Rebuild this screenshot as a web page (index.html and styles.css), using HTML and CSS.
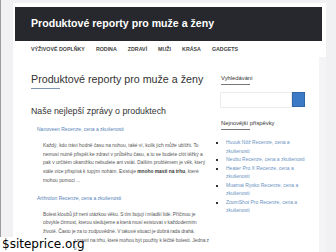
FILE: index.html
```html
<!DOCTYPE html>
<html>

<head>
    <meta charset="utf-8">
    <title>Produktové reporty pro muže a ženy</title>
    <link rel="stylesheet" href="styles.css">
</head>

<body>
    <div class="page">
        <header class="masthead">
            <div class="site-title">Produktové reporty pro muže a ženy</div>
        </header>
        <nav class="menu">
            <a href="#">Výživové doplňky</a>
            <a href="#">Rodina</a>
            <a href="#">Zdraví</a>
            <a href="#">Muži</a>
            <a href="#">Krása</a>
            <a href="#">Gadgets</a>
        </nav>
        <div class="content">
            <main class="main">
                <h1 class="page-title">Produktové reporty pro muže a ženy</h1>
                <h2 class="section-title">Naše nejlepší zprávy o produktech</h2>
                <article class="post">
                    <a class="post-link" href="#">Nanoveen Recenze, cena a zkušenosti</a>
                    <p>Každý, kdo tráví hodně času na nohou, také ví, kolik jich může ublížit. To nemusí nutně přispět ke zdraví v průběhu času, a tu se budete cítit těžký a pak v určitém okamžiku nebudete ani vstát. Dalším problémem je věk, který stále více přispívá k tupým nohám. Existuje <b>mnoho mastí na trhu</b>, které mohou pomoci ...</p>
                </article>
                <article class="post">
                    <a class="post-link" href="#">Arthrolon Recenze, cena a zkušenosti</a>
                    <p class="tight">Bolest kloubů již není otázkou věku. S tím bojují i mladší lidé. Příčinou je obvykle činnost, kterou sledujeme a která musí existovat v každodenním životě. Často je za to zodpovědné. V takové situaci je dobrá rada drahá. Existuje mnoho mastí na trhu, které mohou být použity k léčbě bolesti. Jedna z nich má výhodu ...</p>
                </article>
            </main>
            <aside class="sidebar">
                <h3 class="widget-title">Vyhledávání</h3>
                <form class="search">
                    <input type="text">
                    <button type="button"></button>
                </form>
                <h3 class="widget-title">Nejnovější příspěvky</h3>
                <ul class="recent">
                    <li><a href="#">Huuuk Nôž Recenze, cena a zkušenosti</a></li>
                    <li><a href="#">Neubu Recenze, cena a zkušenosti</a></li>
                    <li><a href="#">Heater Pro X Recenze, cena a zkušenosti</a></li>
                    <li><a href="#">Muamai Ryoko Recenze, cena a zkušenosti</a></li>
                    <li><a href="#">ZoomShot Pro Recenze, cena a zkušenosti</a></li>
                </ul>
            </aside>
        </div>
    </div>
    <div class="stamp">$siteprice.org</div>
</body>

</html>
```

FILE: styles.css
```css
body {
    margin: 0;
    min-height: 252px;
    background: #f1f1f3;
    border-left: 1px solid #9c9c9c;
    font-family: "Liberation Sans", Arial, sans-serif;
    color: #555;
    overflow: hidden;
}

a {
    text-decoration: none;
}

.page {
    width: 313px;
    margin: 3px 0 0 12px;
    padding: 4px 0 0 2px;
    box-sizing: border-box;
    background: #fff;
}

.masthead {
    height: 34px;
    margin-right: 4px;
    padding: 0 0 2px 16px;
    box-sizing: border-box;
    display: flex;
    align-items: center;
    background: #26282d;
}

.site-title {
    color: #fff;
    font-weight: bold;
    font-size: 10.6px;
}

.menu {
    height: 16px;
    margin-right: 4px;
    padding-left: 16px;
    display: flex;
    align-items: center;
    gap: 11px;
}

.menu a {
    color: #444;
    font-size: 5.3px;
    font-weight: bold;
    text-transform: uppercase;
}

.content {
    display: grid;
    grid-template-columns: 198px 106px;
    min-height: 200px;
    background: linear-gradient(to right, #fff 304px, #f4f4f6 304px);
}

.main {
    padding: 16px 0 0 16px;
}

.page-title {
    margin: 0;
    font-size: 10.7px;
    line-height: 13px;
    font-weight: normal;
    color: #333;
}

.page-title::after,
.widget-title::after {
    content: "";
    display: block;
    width: 29px;
    height: 1px;
    margin-top: 2px;
    background: #7f95b2;
}

.section-title {
    margin: 17px 0 0;
    font-size: 8.8px;
    line-height: 11px;
    font-weight: normal;
    color: #333;
}

.post {
    margin-top: 8px;
}

.post-link {
    display: block;
    margin-left: 6px;
    font-size: 5px;
    line-height: 8px;
    color: #5683b8;
}

.post p {
    width: 168px;
    margin: 9px 0 8px 12px;
    font-size: 4.85px;
    line-height: 8.7px;
}

.post p.tight {
    word-spacing: -0.2px;
}

.post b {
    color: #333;
}

.sidebar {
    padding: 17px 14px 0 8px;
}

.widget-title {
    margin: 0;
    font-size: 5.8px;
    line-height: 8px;
    font-weight: normal;
    color: #333;
}

.widget-title::after {
    background: #777;
}

.search {
    display: flex;
    margin: 7px 0 11px -1px;
}

.search input {
    width: 72px;
    height: 16px;
    padding: 0;
    box-sizing: border-box;
    border: 1px solid #ececec;
    outline: none;
}

.search button {
    width: 13px;
    height: 15px;
    padding: 0;
    border: 1px solid #2f66a8;
    background: #3c7ac6;
}

.recent {
    margin: 8px 0 0;
    padding-left: 5px;
    list-style: square;
    font-size: 5px;
    line-height: 8.5px;
}

.recent li::marker {
    color: #333;
}

.recent a {
    color: #6a92c2;
}

.stamp {
    position: absolute;
    left: 0;
    top: 237px;
    width: 74px;
    height: 15px;
    background: #fff;
    color: #000;
    font-family: "DejaVu Sans", sans-serif;
    font-size: 12px;
    line-height: 15px;
    padding-left: 2px;
    box-sizing: border-box;
}
```
